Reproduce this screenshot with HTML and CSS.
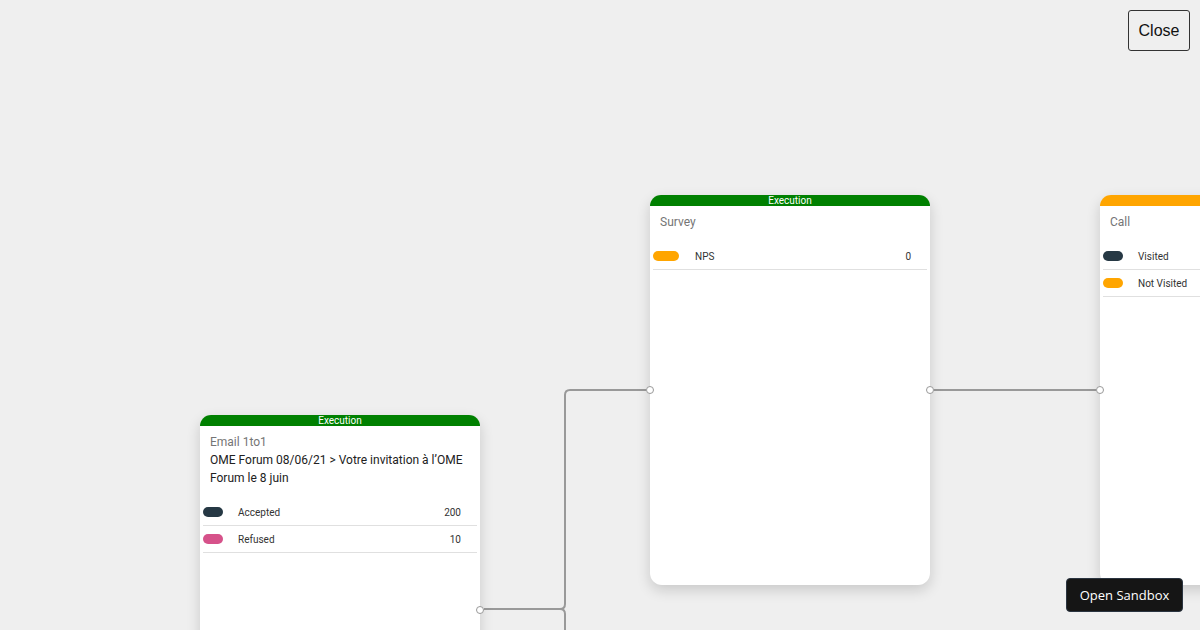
FILE: index.html
```html
<!DOCTYPE html>
<html lang="fr">
<head>
    <meta charset="UTF-8">
    <meta name="viewport" content="width=device-width, initial-scale=1.0">
    <title>Flow</title>
    <link rel="stylesheet" href="styles.css">
</head>
<body>

    <button class="close-button">Close</button>

    <!-- Canvas du flow -->
    <div class="canvas">
        <svg class="edges" width="1200" height="630" viewBox="0 0 1200 630">
            <path d="M484 609 H560 Q565 609 565 604 V395 Q565 390 570 390 H646" />
            <path d="M484 609 H560 Q565 609 565 614 V632" />
            <path d="M934 390 H1096" />
        </svg>

        <!-- Email -->
        <div class="node" style="left: 200px; top: 415px;">
            <div class="node-header execution">Execution</div>
            <div class="node-body">
                <div class="node-title">Email 1to1</div>
                <div class="node-subtitle">OME Forum 08/06/21 &gt; Votre invitation à l’OME Forum le 8 juin</div>
            </div>
            <div class="stats">
                <div class="stat-row">
                    <span class="pill dark"></span>
                    <span class="stat-label">Accepted</span>
                    <span class="stat-value">200</span>
                </div>
                <div class="stat-row">
                    <span class="pill pink"></span>
                    <span class="stat-label">Refused</span>
                    <span class="stat-value">10</span>
                </div>
            </div>
            <span class="handle right"></span>
        </div>

        <!-- Survey -->
        <div class="node" style="left: 650px; top: 195px;">
            <div class="node-header execution">Execution</div>
            <div class="node-body">
                <div class="node-title">Survey</div>
            </div>
            <div class="stats">
                <div class="stat-row">
                    <span class="pill orange wide"></span>
                    <span class="stat-label">NPS</span>
                    <span class="stat-value">0</span>
                </div>
            </div>
            <span class="handle left"></span>
            <span class="handle right"></span>
        </div>

        <!-- Call -->
        <div class="node" style="left: 1100px; top: 195px;">
            <div class="node-header pending"></div>
            <div class="node-body">
                <div class="node-title">Call</div>
            </div>
            <div class="stats">
                <div class="stat-row">
                    <span class="pill dark"></span>
                    <span class="stat-label">Visited</span>
                    <span class="stat-value"></span>
                </div>
                <div class="stat-row">
                    <span class="pill orange"></span>
                    <span class="stat-label">Not Visited</span>
                    <span class="stat-value"></span>
                </div>
            </div>
            <span class="handle left"></span>
        </div>
    </div>

    <button class="sandbox-button">Open Sandbox</button>

</body>
</html>
```

FILE: styles.css
```css
body {
    margin: 0;
    padding: 0;
    width: 1200px;
    height: 630px;
    overflow: hidden;
    background-color: #efefef;
    font-family: Roboto, "Liberation Sans", sans-serif;
}

/* Canvas */
.canvas {
    position: relative;
    width: 1200px;
    height: 630px;
    overflow: hidden;
}

.edges {
    position: absolute;
    top: 0;
    left: 0;
}

.edges path {
    fill: none;
    stroke: #999;
    stroke-width: 2;
}

/* Nodos */
.node {
    position: absolute;
    width: 280px;
    height: 390px;
    background-color: #fff;
    border-radius: 12px;
    box-shadow: 0 5px 14px rgba(0, 0, 0, 0.16);
}

.node-header {
    height: 11px;
    line-height: 11px;
    font-size: 10px;
    color: #fff;
    text-align: center;
    border-radius: 12px 12px 0 0;
}

.node-header.execution {
    background-color: #008000;
}

.node-header.pending {
    background-color: #ffa500;
}

.node-body {
    padding: 9px 10px 0;
}

.node-title {
    font-size: 12px;
    line-height: 14px;
    color: #757575;
}

.node-subtitle {
    margin: 2px 0 -2px;
    font-size: 12px;
    line-height: 18px;
    color: #212121;
}

.stats {
    margin: 14px 3px 0;
}

.stat-row {
    display: flex;
    align-items: center;
    box-sizing: border-box;
    height: 27px;
    border-bottom: 1px solid #e0e0e0;
    font-size: 10px;
    color: #333;
}

.pill {
    width: 20px;
    height: 10px;
    border-radius: 5px;
    flex-shrink: 0;
}

.pill.wide {
    width: 26px;
}

.pill.dark { background-color: #263844; }
.pill.pink { background-color: #d6528a; }
.pill.orange { background-color: #ffa500; }

.stat-label {
    margin-left: 15px;
}

.pill.wide + .stat-label {
    margin-left: 16px;
}

.stat-value {
    margin-left: auto;
    padding-right: 16px;
}

/* Puntos de conexión */
.handle {
    position: absolute;
    top: 50%;
    width: 6px;
    height: 6px;
    margin-top: -4px;
    border: 1px solid #999;
    border-radius: 50%;
    background-color: #fff;
}

.handle.left { left: -4px; }
.handle.right { right: -4px; }

/* Botones */
.close-button {
    position: fixed;
    top: 10px;
    right: 10px;
    z-index: 10;
    width: 62px;
    height: 41px;
    padding: 0;
    background-color: #efefef;
    border: 1px solid #333;
    border-radius: 3px;
    font-family: "Liberation Sans", Arial, sans-serif;
    font-size: 16px;
    color: #111;
}

.sandbox-button {
    position: fixed;
    left: 1066px;
    top: 578px;
    z-index: 10;
    width: 117px;
    height: 34px;
    padding: 0;
    background-color: #151515;
    border: 1px solid #2a3440;
    border-radius: 4px;
    font-family: "Open Sans", sans-serif;
    font-size: 13px;
    color: #fff;
}
```
